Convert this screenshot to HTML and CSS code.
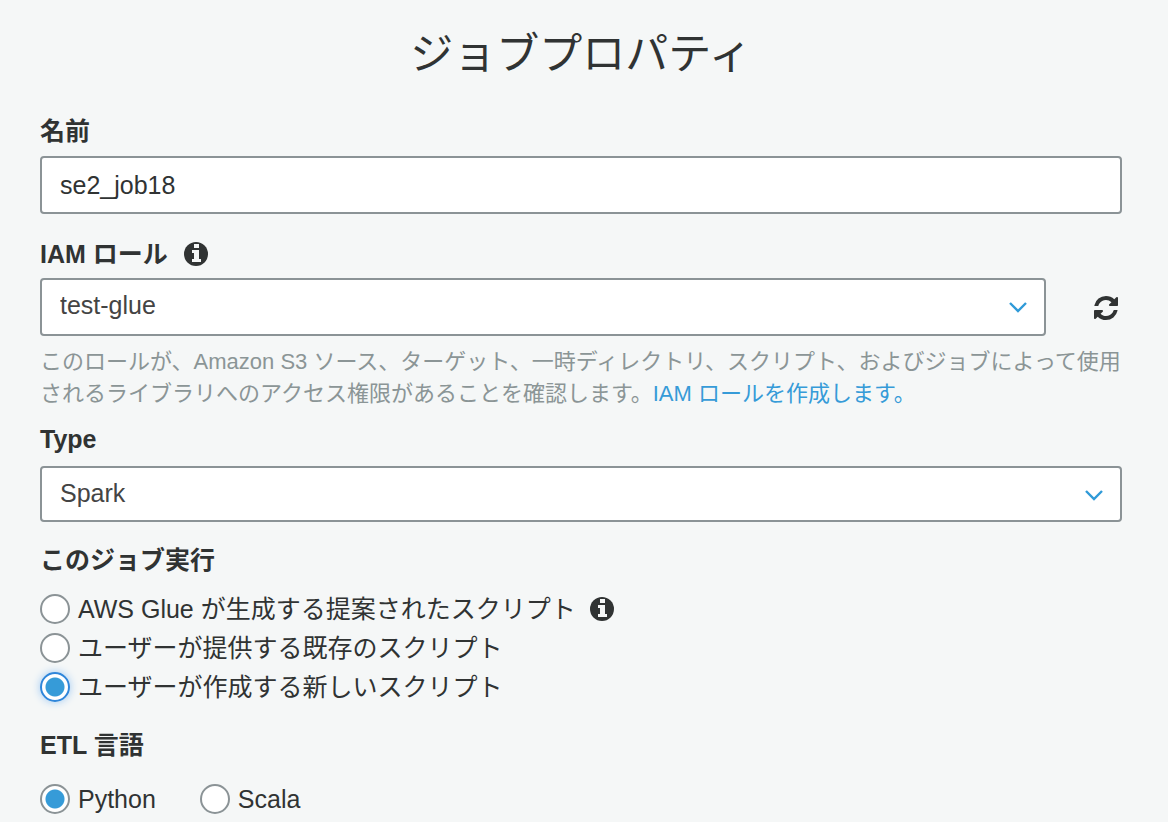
FILE: index.html
```html
<!DOCTYPE html>
<html lang="ja">
<head>
<meta charset="utf-8">
<meta name="viewport" content="width=device-width, initial-scale=1">
<title>ジョブプロパティ</title>
<link rel="stylesheet" href="styles.css">
</head>
<body>
<svg class="symbols" aria-hidden="true">
  <symbol id="info" viewBox="0 0 24 24">
    <circle cx="12" cy="12" r="12" fill="currentColor"/>
    <path fill="#f5f7f7" d="M10 2h5v4h-5zM8 8h7v9h2v3H8v-3h2v-6H8z"/>
  </symbol>
  <symbol id="chevron" viewBox="0 0 18 12">
    <path d="M1 1l8 8 8-8" fill="none" stroke="currentColor" stroke-width="2.400"/>
  </symbol>
  <symbol id="refresh" viewBox="0 0 1536 1536">
    <path fill="currentColor" d="M1511 928q0 5-1 7-64 268-268 434.500T764 1536q-146 0-282.500-55T238 1324l-129 129q-19 19-45 19t-45-19-19-45V960q0-26 19-45t45-19h448q26 0 45 19t19 45-19 45l-137 137q71 66 161 102t187 36q134 0 250-65t186-179q11-17 53-117 8-23 30-23h192q13 0 22.500 9.500t9.500 22.500zM1536 128v448q0 26-19 45t-45 19h-448q-26 0-45-19t-19-45 19-45l138-138Q969 256 768 256q-134 0-250 65T332 500q-11 17-53 117-8 23-30 23H50q-13 0-22.500-9.500T18 608v-7q65-268 270-434.500T768 0q146 0 284 55.500T1297 212l130-129q19-19 45-19t45 19 19 45z"/>
  </symbol>
</svg>
<main class="page">
  <h1 class="title">ジョブプロパティ</h1>
  <form class="form">
    <div class="field field-name">
      <label class="label" for="name">名前</label>
      <input class="control" id="name" type="text" value="se2_job18">
    </div>
    <div class="field field-role">
      <div class="label-row">
        <label class="label" for="role">IAM ロール</label>
        <svg class="info"><use href="#info"/></svg>
      </div>
      <div class="role-row">
        <div class="select-wrap">
          <select class="control select" id="role"><option>test-glue</option></select>
          <svg class="chevron"><use href="#chevron"/></svg>
        </div>
        <button class="refresh" type="button" aria-label="更新"><svg class="refresh-icon"><use href="#refresh"/></svg></button>
      </div>
      <p class="help">このロールが、Amazon S3 ソース、ターゲット、一時ディレクトリ、スクリプト、およびジョブによって使用されるライブラリへのアクセス権限があることを確認します。<a class="link" href="#">IAM ロールを作成します。</a></p>
    </div>
    <div class="field field-type">
      <label class="label" for="type">Type</label>
      <div class="select-wrap">
        <select class="control select" id="type"><option>Spark</option></select>
        <svg class="chevron"><use href="#chevron"/></svg>
      </div>
    </div>
    <fieldset class="group">
      <legend class="label">このジョブ実行</legend>
      <div class="options">
        <div class="option-row">
          <label class="option"><input class="radio" type="radio" name="script">AWS Glue が生成する提案されたスクリプト</label>
          <svg class="info"><use href="#info"/></svg>
        </div>
        <label class="option"><input class="radio" type="radio" name="script">ユーザーが提供する既存のスクリプト</label>
        <label class="option"><input class="radio radio-active" type="radio" name="script" checked>ユーザーが作成する新しいスクリプト</label>
      </div>
    </fieldset>
    <fieldset class="group group-lang">
      <legend class="label">ETL 言語</legend>
      <div class="languages">
        <label class="option"><input class="radio" type="radio" name="lang" checked>Python</label>
        <label class="option"><input class="radio" type="radio" name="lang">Scala</label>
      </div>
    </fieldset>
  </form>
</main>
</body>
</html>
```
FILE: styles.css
```css
* { box-sizing: border-box; }

body {
  margin: 0;
  background: #f5f7f7;
  color: #303333;
  font-family: "Liberation Sans", "Noto Sans CJK JP", sans-serif;
  font-size: 25px;
  line-height: 32px;
}

.symbols { display: none; }

.page { padding: 22px 46px 0 40px; }

.title {
  margin: 0;
  font-size: 43px;
  font-weight: 400;
  line-height: 64px;
  text-align: center;
}

.form { margin-top: 29px; }

.field {
  display: flex;
  flex-direction: column;
}

.field-name { gap: 9px; }
.field-role { margin-top: 24px; }
.field-type { margin-top: 13px; gap: 11px; }

.label {
  padding: 0;
  font-weight: 700;
}

.label-row {
  display: flex;
  align-items: center;
  gap: 16px;
}

.info {
  flex: none;
  width: 24px;
  height: 24px;
}

.control {
  display: block;
  width: 100%;
  height: 58px;
  padding: 0 18px;
  border: 2px solid #8b9396;
  border-radius: 4px;
  background: #fff;
  color: #303333;
  font: inherit;
}

.select {
  appearance: none;
  height: 56px;
  padding-bottom: 2px;
  color: #444;
}

.select-wrap {
  position: relative;
  flex: 1;
}

.chevron {
  position: absolute;
  top: 24px;
  right: 19px;
  width: 18px;
  height: 12px;
  color: #2f9ad8;
  pointer-events: none;
}

.role-row {
  display: flex;
  align-items: center;
  gap: 48px;
  margin-top: 8px;
}

.role-row .select {
  height: 58px;
  padding-bottom: 4px;
}

.refresh {
  display: flex;
  padding: 2px 4px 0 0;
  border: 0;
  background: none;
  color: inherit;
}

.refresh-icon {
  width: 24px;
  height: 24px;
}

.help {
  margin: 10px 0 0;
  color: #8b9596;
  font-size: 22px;
}

.link {
  color: #369bd8;
  text-decoration: none;
}

.group {
  margin: 22px 0 0;
  padding: 0;
  border: 0;
}

.group-lang { margin-top: 26px; }

.options {
  display: flex;
  flex-direction: column;
  align-items: flex-start;
  gap: 7px;
  margin-top: 17px;
}

.option-row {
  display: flex;
  align-items: center;
  gap: 14px;
}

.option {
  display: flex;
  align-items: center;
  gap: 8px;
}

.radio {
  appearance: none;
  flex: none;
  width: 30px;
  height: 30px;
  margin: 0;
  border: 2px solid #8b9396;
  border-radius: 50%;
  background: #fff;
}

.radio:checked { background: radial-gradient(circle, #369bd8 9px, #fff 10px); }

.radio-active {
  border-color: #2f86da;
  box-shadow: 0 0 8px #9dc8f3;
}

.languages {
  display: flex;
  gap: 44px;
  margin-top: 22px;
}
```
